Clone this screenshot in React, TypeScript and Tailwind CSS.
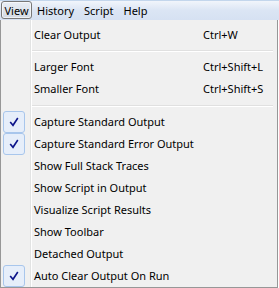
import React from 'react';

type Item =
  | { kind: 'item'; label: string; shortcut?: string; checked?: boolean }
  | { kind: 'sep'; h: string };

const ITEMS: Item[] = [
  { kind: 'item', label: 'Clear Output', shortcut: 'Ctrl+W' },
  { kind: 'sep', h: 'h-[10px]' },
  { kind: 'item', label: 'Larger Font', shortcut: 'Ctrl+Shift+L' },
  { kind: 'item', label: 'Smaller Font', shortcut: 'Ctrl+Shift+S' },
  { kind: 'sep', h: 'h-[11px]' },
  { kind: 'item', label: 'Capture Standard Output', checked: true },
  { kind: 'item', label: 'Capture Standard Error Output', checked: true },
  { kind: 'item', label: 'Show Full Stack Traces' },
  { kind: 'item', label: 'Show Script in Output' },
  { kind: 'item', label: 'Visualize Script Results' },
  { kind: 'item', label: 'Show Toolbar' },
  { kind: 'item', label: 'Detached Output' },
  { kind: 'item', label: 'Auto Clear Output On Run', checked: true },
];

const MENUS = ['View', 'History', 'Script', 'Help'];

export default function App() {
  return (
    <div className="w-[279px] h-[288px] bg-white text-[11px] text-black overflow-hidden"
      style={{ fontFamily: '"Segoe UI", "Noto Sans", sans-serif' }}>
      <div className="h-[20px] flex items-stretch border-t border-[#c3d6ec] bg-gradient-to-b from-[#f1f5fb] via-[#dbe5f4] to-[#d6e1f2]">
        {MENUS.map((m, i) => (
          <div key={m}
            className={i === 0
              ? 'ml-[1px] w-[31px] justify-center flex items-center rounded-[3px] border border-[#787878] bg-gradient-to-b from-[#e9eef5] to-[#d3dae4] shadow-[inset_0_0_0_1px_rgba(255,255,255,0.6)] leading-none h-[18px]'
              : 'px-[5px] flex items-center leading-none'}>
            {m}
          </div>
        ))}
      </div>
      <div className="relative w-[278px] h-[268px] bg-[#f0f0f0] border-l border-r border-b border-[#979797] pt-[4px]">
        <div className="absolute left-[29px] top-0 bottom-0 w-[2px] border-l border-[#e2e3e3] bg-white" />
        {ITEMS.map((it, i) =>
          it.kind === 'sep' ? (
            <div key={i} className={`${it.h} flex items-center pl-[31px] pr-[4px]`}>
              <div className="h-[2px] w-full border-t border-[#e0e0e0] bg-white" />
            </div>
          ) : (
            <div key={i} className="relative h-[22px] flex items-center">
              <div className="w-[33px] shrink-0 pl-[2px] flex items-center">
                {it.checked && (
                  <div className="w-[22px] h-[22px] rounded-[3px] border border-[#a8c6ec] bg-[#e6eefa] flex items-center justify-center">
                    <svg width="10" height="10" viewBox="0 0 10 10">
                      <path d="M1.2 5 L4 8.3 L8.8 1" stroke="#0c148a" strokeWidth="1.6" fill="none" />
                    </svg>
                  </div>
                )}
              </div>
              <span className="w-[169px] shrink-0 whitespace-nowrap">{it.label}</span>
              {it.shortcut && <span className="whitespace-nowrap">{it.shortcut}</span>}
            </div>
          )
        )}
      </div>
    </div>
  );
}
